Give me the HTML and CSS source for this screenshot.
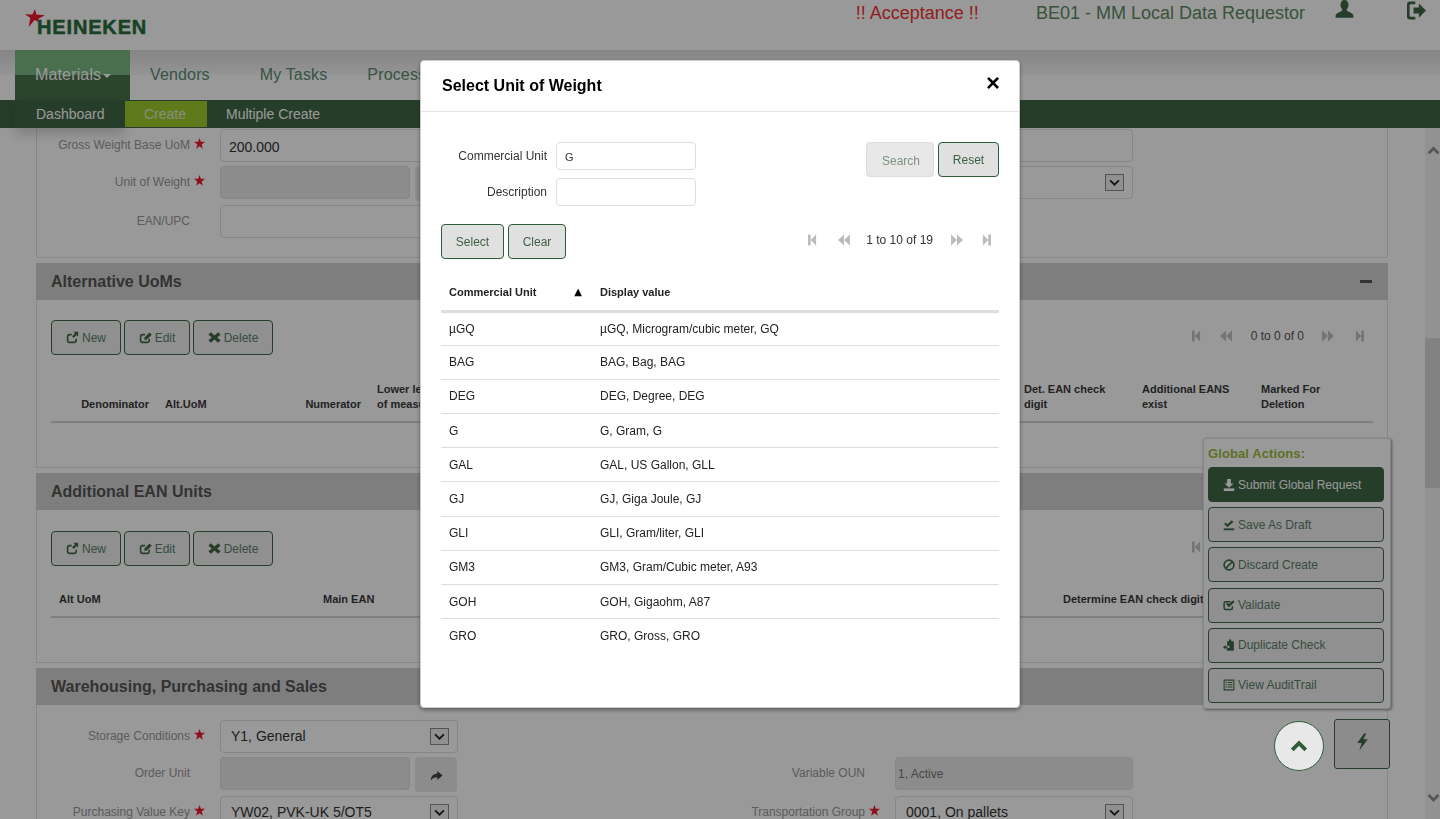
FILE: index.html
```html
<!DOCTYPE html>
<html lang="en">
<head>
    <meta charset="UTF-8">
    <meta name="viewport" content="width=device-width, initial-scale=1.0">
    <title>Select Unit of Weight</title>
    <link rel="stylesheet" href="styles.css">
</head>
<body>
    <svg class="sprite" xmlns="http://www.w3.org/2000/svg">
        <symbol id="i-user" viewBox="0 0 16 16"><path d="M8 0c2.2 0 3.4 1.8 3.4 4 0 1.6-.7 3.2-1.6 4 .1.8.5 1.2 1.4 1.6 1.6.7 3.8 1.4 4.3 3.4v2H.5v-2c.5-2 2.7-2.7 4.3-3.4.9-.4 1.3-.8 1.4-1.6-.9-.8-1.6-2.4-1.6-4C4.6 1.8 5.8 0 8 0z"/></symbol>
        <symbol id="i-logout" viewBox="0 0 16 16"><path d="M0 3a2.500 2.500 0 0 1 2.500-2.500H7v2.200H3a.8.8 0 0 0-.8.8v9a.8.8 0 0 0 .8.8h4v2.200H2.500A2.500 2.500 0 0 1 0 13z"/><path d="M5.500 5.500H10V2l6 6-6 6v-3.500H5.500z"/></symbol>
        <symbol id="i-new" viewBox="0 0 16 16"><path d="M12.500 9.500V12a2 2 0 0 1-2 2H4a2 2 0 0 1-2-2V6.500a2 2 0 0 1 2-2h3" fill="none" stroke="currentColor" stroke-width="2"/><path d="M9 1h6v6l-2-2-3.500 3.500-2-2L11 3z"/></symbol>
        <symbol id="i-edit" viewBox="0 0 16 16"><path d="M12.500 9.500V12a2 2 0 0 1-2 2H4a2 2 0 0 1-2-2V6.500a2 2 0 0 1 2-2h3.500" fill="none" stroke="currentColor" stroke-width="2"/><path d="M6.500 11l.5-3.200L13 1.800l2.700 2.700-6 6z"/></symbol>
        <symbol id="i-remove" viewBox="0 0 16 16"><path d="M3.500 1.500L8 5.500l4.500-4 3 3-4.200 3.500 4.200 3.500-3 3L8 10.500l-4.500 4-3-3L4.700 8 .5 4.500z"/></symbol>
        <symbol id="i-download" viewBox="0 0 16 16"><path d="M5.500 0h5v6H14l-6 5.500L2 6h3.500z"/><path d="M1 12.500h14V16H1z"/></symbol>
        <symbol id="i-saved" viewBox="0 0 16 16"><path d="M1 12.500h14V15H1z"/><path d="M1.500 6.500L3.500 4.500 6 7l5.500-5.500 2.500 2L6 11z"/></symbol>
        <symbol id="i-ban" viewBox="0 0 16 16"><circle cx="8" cy="8" r="6.500" fill="none" stroke="currentColor" stroke-width="2.200"/><path d="M3.500 12.500l9-9" stroke="currentColor" stroke-width="2.200"/></symbol>
        <symbol id="i-check" viewBox="0 0 16 16"><path d="M12.500 9.500V12a2 2 0 0 1-2 2H3.500a2 2 0 0 1-2-2V5.500a2 2 0 0 1 2-2H10" fill="none" stroke="currentColor" stroke-width="2"/><path d="M4 6.500l2-2 2 2 5.500-5 2 2L8 11z"/></symbol>
        <symbol id="i-duplicate" viewBox="0 0 16 16"><path d="M6 3h2V.8h3V3h3.500v12.500H5V12h3.500V9H5.500V3z"/><path d="M0 11l3.500-3v2H6v2H3.500v2z"/></symbol>
        <symbol id="i-list" viewBox="0 0 16 16"><path d="M1.500 1.500h13v13h-13z" fill="none" stroke="currentColor" stroke-width="1.400"/><path d="M3.500 4h2v1.400h-2zM6.500 4h6v1.400h-6zM3.500 7h2v1.400h-2zM6.500 7h6v1.400h-6zM3.500 10h2v1.400h-2zM6.500 10h6v1.400h-6z"/></symbol>
        <symbol id="i-flash" viewBox="0 0 16 16"><path d="M9.500 0L3 9h4.200L5 16l8-10.500H8.800L11.500 0z"/></symbol>
        <symbol id="i-up" viewBox="0 0 16 16"><path d="M2 11.500L8 5.500l6 6" fill="none" stroke="currentColor" stroke-width="3.400"/></symbol>
        <symbol id="i-down" viewBox="0 0 16 16"><path d="M2 5L8 11l6-6" fill="none" stroke="currentColor" stroke-width="3.400"/></symbol>
        <symbol id="i-chev" viewBox="0 0 19 17"><path d="M4.500 6l5 5 5-5" fill="none" stroke="currentColor" stroke-width="2"/></symbol>
        <symbol id="i-share" viewBox="0 0 16 16"><path d="M9 2.500l6.500 5.500L9 13.500V10c-3.500 0-6 1-8 4 0-5 3-8 8-8.500z"/></symbol>
        <symbol id="i-first" viewBox="0 0 10 12"><path d="M0 0h3v12H0zM3 6l6-6v12z"/></symbol>
        <symbol id="i-prev" viewBox="0 0 12 12"><path d="M0 6l6-5.500v11zM6 6l6-5.500v11z"/></symbol>
        <symbol id="i-next" viewBox="0 0 12 12"><path d="M12 6L6 .5v11zM6 6L0 .5v11z"/></symbol>
        <symbol id="i-last" viewBox="0 0 10 12"><path d="M10 0H7v12h3zM7 6L1 0v12z"/></symbol>
        <symbol id="i-star" viewBox="0 0 12 12"><path d="M6 0l1.500 4.200H12L8.400 7l1.300 4.600L6 8.900l-3.700 2.700L3.600 7 0 4.200h4.500z"/></symbol>
    </svg>

    <header class="topbar">
        <div class="logo">
            <svg class="logo-star" viewBox="0 0 20 18"><path d="M10 0l1.400 5.400L20 6.300l-6.600 3.500.6 3.500-4.400-2.200L3.700 18l1.500-9.200L0 5.200l7.400.2z"/></svg>
            <span class="logo-text">HEINEKEN</span>
        </div>
        <span class="env-name">!! Acceptance !!</span>
        <span class="user-role">BE01 - MM Local Data Requestor</span>
        <svg class="top-icon user-icon"><use href="#i-user"/></svg>
        <svg class="top-icon logout-icon"><use href="#i-logout"/></svg>
    </header>

    <nav class="mainnav">
        <a class="mainnav-item active">Materials<span class="caret"></span></a>
        <a class="mainnav-item">Vendors<span class="caret"></span></a>
        <a class="mainnav-item">My Tasks</a>
        <a class="mainnav-item">Process</a>
    </nav>
    <nav class="subnav">
        <a class="subnav-item first">Dashboard</a>
        <a class="subnav-item active">Create</a>
        <a class="subnav-item last">Multiple Create</a>
    </nav>

    <main class="page">
        <div class="content">
            <section class="panel panel-cut">
                <div class="field-row">
                    <div class="field">
                        <label class="field-label">Gross Weight Base UoM<span class="req"><svg><use href="#i-star"/></svg></span></label>
                        <input class="input" type="text" value="200.000">
                    </div>
                    <div class="field">
                        <label class="field-label"></label>
                        <input class="input" type="text">
                    </div>
                </div>
                <div class="field-row wide">
                    <div class="field">
                        <label class="field-label">Unit of Weight<span class="req"><svg><use href="#i-star"/></svg></span></label>
                        <input class="input input-short" type="text" readonly>
                        <button class="go-btn"><svg><use href="#i-share"/></svg></button>
                    </div>
                    <div class="field">
                        <label class="field-label"></label>
                        <div class="select"><span></span><span class="select-btn"><svg><use href="#i-chev"/></svg></span></div>
                    </div>
                </div>
                <div class="field-row">
                    <div class="field">
                        <label class="field-label">EAN/UPC<span class="req"></span></label>
                        <input class="input" type="text">
                    </div>
                </div>
            </section>

            <section class="panel">
                <div class="panel-head">
                    <h3>Alternative UoMs</h3>
                    <span class="collapse-bar"></span>
                </div>
                <div class="panel-body">
                    <div class="toolbar">
                        <div class="btn-group">
                            <button class="btn btn-new"><svg><use href="#i-new"/></svg>New</button>
                            <button class="btn btn-edit"><svg><use href="#i-edit"/></svg>Edit</button>
                            <button class="btn btn-delete"><svg><use href="#i-remove"/></svg>Delete</button>
                        </div>
                        <div class="pager">
                            <svg class="pg-first"><use href="#i-first"/></svg>
                            <svg class="pg-prev"><use href="#i-prev"/></svg>
                            <span class="pg-text">0 to 0 of 0</span>
                            <svg class="pg-next"><use href="#i-next"/></svg>
                            <svg class="pg-last"><use href="#i-last"/></svg>
                        </div>
                    </div>
                    <table class="grid grid-alt">
                        <colgroup><col class="c1"><col class="c2"><col class="c3"><col class="c4"><col class="c5"><col class="c6"><col class="c7"></colgroup>
                        <thead>
                            <tr>
                                <th class="right">Denominator</th>
                                <th>Alt.UoM</th>
                                <th class="right">Numerator</th>
                                <th>Lower level of<br>of measure</th>
                                <th>Det. EAN check<br>digit</th>
                                <th>Additional EANS<br>exist</th>
                                <th>Marked For<br>Deletion</th>
                            </tr>
                        </thead>
                    </table>
                </div>
            </section>

            <section class="panel">
                <div class="panel-head">
                    <h3>Additional EAN Units</h3>
                </div>
                <div class="panel-body ean-body">
                    <div class="toolbar">
                        <div class="btn-group">
                            <button class="btn btn-new"><svg><use href="#i-new"/></svg>New</button>
                            <button class="btn btn-edit"><svg><use href="#i-edit"/></svg>Edit</button>
                            <button class="btn btn-delete"><svg><use href="#i-remove"/></svg>Delete</button>
                        </div>
                        <div class="pager">
                            <svg class="pg-first"><use href="#i-first"/></svg>
                            <svg class="pg-prev"><use href="#i-prev"/></svg>
                            <span class="pg-text">0 to 0 of 0</span>
                            <svg class="pg-next"><use href="#i-next"/></svg>
                            <svg class="pg-last"><use href="#i-last"/></svg>
                        </div>
                    </div>
                    <table class="grid grid-ean">
                        <colgroup><col class="e1"><col class="e2"><col class="e3"></colgroup>
                        <thead>
                            <tr>
                                <th>Alt UoM</th>
                                <th>Main EAN</th>
                                <th>Determine EAN check digit</th>
                            </tr>
                        </thead>
                    </table>
                </div>
            </section>

            <section class="panel">
                <div class="panel-head">
                    <h3>Warehousing, Purchasing and Sales</h3>
                </div>
                <div class="panel-body fields">
                    <div class="field-row">
                        <div class="field">
                            <label class="field-label">Storage Conditions<span class="req"><svg><use href="#i-star"/></svg></span></label>
                            <div class="select"><span>Y1, General</span><span class="select-btn"><svg><use href="#i-chev"/></svg></span></div>
                        </div>
                    </div>
                    <div class="field-row wide">
                        <div class="field">
                            <label class="field-label">Order Unit<span class="req"></span></label>
                            <input class="input input-short" type="text" readonly>
                            <button class="go-btn"><svg><use href="#i-share"/></svg></button>
                        </div>
                        <div class="field">
                            <label class="field-label">Variable OUN<span class="req"></span></label>
                            <input class="input input-small" type="text" value="1, Active" readonly>
                        </div>
                    </div>
                    <div class="field-row">
                        <div class="field">
                            <label class="field-label">Purchasing Value Key<span class="req"><svg><use href="#i-star"/></svg></span></label>
                            <div class="select"><span>YW02, PVK-UK 5/OT5</span><span class="select-btn"><svg><use href="#i-chev"/></svg></span></div>
                        </div>
                        <div class="field">
                            <label class="field-label">Transportation Group<span class="req"><svg><use href="#i-star"/></svg></span></label>
                            <div class="select"><span>0001, On pallets</span><span class="select-btn"><svg><use href="#i-chev"/></svg></span></div>
                        </div>
                    </div>
                </div>
            </section>
        </div>
        <div class="scrollbar">
            <svg class="scroll-arrow"><use href="#i-up"/></svg>
            <div class="scroll-thumb"></div>
            <svg class="scroll-arrow"><use href="#i-down"/></svg>
        </div>
    </main>

    <aside class="global-actions">
        <h4>Global Actions:</h4>
        <button class="action primary"><svg><use href="#i-download"/></svg>Submit Global Request</button>
        <button class="action"><svg><use href="#i-saved"/></svg>Save As Draft</button>
        <button class="action"><svg><use href="#i-ban"/></svg>Discard Create</button>
        <button class="action"><svg><use href="#i-check"/></svg>Validate</button>
        <button class="action"><svg><use href="#i-duplicate"/></svg>Duplicate Check</button>
        <button class="action"><svg><use href="#i-list"/></svg>View AuditTrail</button>
    </aside>
    <button class="flash-btn"><svg><use href="#i-flash"/></svg></button>

    <div class="backdrop"></div>
    <button class="top-btn"><svg><use href="#i-up"/></svg></button>

    <div class="modal">
        <div class="modal-head">
            <h2>Select Unit of Weight</h2>
            <span class="modal-close">&times;</span>
        </div>
        <div class="modal-body">
            <form class="search-form">
                <div class="search-fields">
                    <div class="search-row">
                        <label>Commercial Unit</label>
                        <input type="text" value="G">
                    </div>
                    <div class="search-row">
                        <label>Description</label>
                        <input type="text">
                    </div>
                </div>
                <div class="btn-group">
                    <button type="button" class="mbtn disabled btn-search">Search</button>
                    <button type="button" class="mbtn btn-reset">Reset</button>
                </div>
            </form>
            <div class="select-bar">
                <div class="btn-group">
                    <button class="mbtn btn-select">Select</button>
                    <button class="mbtn btn-clear">Clear</button>
                </div>
                <div class="pager modal-pager">
                    <svg class="pg-first"><use href="#i-first"/></svg>
                    <svg class="pg-prev"><use href="#i-prev"/></svg>
                    <span class="pg-text">1 to 10 of 19</span>
                    <svg class="pg-next"><use href="#i-next"/></svg>
                    <svg class="pg-last"><use href="#i-last"/></svg>
                </div>
            </div>
            <table class="unit-table">
                <thead>
                    <tr>
                        <th class="unit-col">Commercial Unit<span class="sort">&#9650;</span></th>
                        <th>Display value</th>
                    </tr>
                </thead>
                <tbody>
                    <tr><td>&micro;GQ</td><td>&micro;GQ, Microgram/cubic meter, GQ</td></tr>
                    <tr><td>BAG</td><td>BAG, Bag, BAG</td></tr>
                    <tr><td>DEG</td><td>DEG, Degree, DEG</td></tr>
                    <tr><td>G</td><td>G, Gram, G</td></tr>
                    <tr><td>GAL</td><td>GAL, US Gallon, GLL</td></tr>
                    <tr><td>GJ</td><td>GJ, Giga Joule, GJ</td></tr>
                    <tr><td>GLI</td><td>GLI, Gram/liter, GLI</td></tr>
                    <tr><td>GM3</td><td>GM3, Gram/Cubic meter, A93</td></tr>
                    <tr><td>GOH</td><td>GOH, Gigaohm, A87</td></tr>
                    <tr><td>GRO</td><td>GRO, Gross, GRO</td></tr>
                </tbody>
            </table>
        </div>
    </div>
</body>
</html>
```

FILE: styles.css
```css
* {
    box-sizing: border-box;
}

body {
    font-family: "Liberation Sans", Arial, sans-serif;
    font-size: 12px;
    background-color: #fff;
    margin: 0;
    height: 819px;
    overflow: hidden;
}

.sprite {
    display: none;
}

button {
    font-family: inherit;
}

svg {
    fill: currentColor;
}

/* top bar */
.topbar {
    height: 50px;
    display: flex;
    align-items: flex-start;
    padding-left: 25px;
    background-color: #fff;
}

.logo {
    display: flex;
    align-items: flex-start;
    margin-right: auto;
    padding-top: 9px;
}

.logo-star {
    width: 20px;
    height: 18px;
    color: #ee1c30;
    fill: currentColor;
}

.logo-text {
    margin: 8px 0 0 -8px;
    font-size: 20px;
    line-height: 20px;
    font-weight: bold;
    letter-spacing: 0.85px;
    color: #2a6e3c;
    -webkit-text-stroke: 0.5px #2a6e3c;
}

.env-name {
    margin-top: 2px;
    font-size: 18px;
    line-height: 22px;
    color: #f53232;
}

.user-role {
    margin: 2px 0 0 57px;
    font-size: 18px;
    line-height: 22px;
    color: #5c8a64;
}

.top-icon {
    width: 19px;
    height: 19px;
    color: #406845;
}

.user-icon {
    margin-left: 30px;
}

.logout-icon {
    margin: 1px 14px 0 53px;
}

/* navigation */
.mainnav {
    height: 50px;
    display: flex;
    padding-left: 15px;
    background: linear-gradient(#dedede, #f7f7f7) 0 0 / 100% 25px repeat-x;
}

.mainnav-item {
    padding: 0 20px;
    font-size: 16px;
    line-height: 50px;
    letter-spacing: 0.15px;
    color: #5c8a72;
    white-space: nowrap;
}

.mainnav-item.active {
    width: 115px;
    color: #fff;
    background: linear-gradient(#7bb982 25px, #49734c 25px);
}

.caret {
    display: inline-block;
    margin-left: 2px;
    vertical-align: middle;
    border-top: 4px solid #fff;
    border-left: 4px solid transparent;
    border-right: 4px solid transparent;
}

.subnav {
    position: relative;
    height: 28px;
    display: flex;
    padding-left: 15px;
    background-color: #406845;
}

.subnav-item {
    padding: 0 20px 0 21px;
    font-size: 14px;
    line-height: 28px;
    color: #fff;
}

.subnav-item.first {
    width: 110px;
    box-shadow: 0 6px 12px rgba(0, 0, 0, 0.18);
}

.subnav-item.active {
    width: 82px;
    height: 26px;
    margin: 1px 0;
    padding: 0 19px;
    line-height: 26px;
    color: #e4eed0;
    background-color: #9dcc2e;
}

.subnav-item.last {
    padding-left: 19px;
}

/* page content */
.page {
    height: 691px;
    display: flex;
    overflow: hidden;
}

.content {
    flex: 1;
    padding: 0 37px 0 36px;
}

.panel {
    margin-bottom: 5px;
    border: 1px solid #e3e3e3;
}

.panel-cut {
    height: 130px;
    padding-top: 1px;
    border-top: 0;
}

.panel-head {
    height: 37px;
    display: flex;
    align-items: center;
    justify-content: space-between;
    padding: 0 16px 0 15px;
    background-color: #d3d3d3;
    margin: -1px -1px 0;
}

.panel-head h3 {
    margin: 0;
    font-size: 16px;
    color: #555;
}

.collapse-bar {
    width: 12px;
    height: 3px;
    background-color: #555;
}

.panel-body {
    padding: 20px 14px 44px;
}

.panel-body.ean-body {
    padding-top: 21px;
}

.panel-body.fields {
    padding: 15px 0 0;
}

.toolbar {
    display: flex;
    justify-content: space-between;
}

.btn-group {
    display: flex;
    gap: 3px;
}

.btn {
    height: 35px;
    padding: 0;
    display: flex;
    align-items: center;
    justify-content: center;
    gap: 3px;
    font-size: 12px;
    color: #5a7f6a;
    background-color: #f0f0f0;
    border: 1px solid #406845;
    border-radius: 4px;
}

.btn svg {
    width: 13px;
    height: 13px;
    color: #406845;
}

.btn-new {
    width: 70px;
}

.btn-edit {
    width: 66px;
}

.btn-delete {
    width: 80px;
}

.pager {
    display: flex;
    align-items: center;
    height: 32px;
    margin-right: 9px;
    color: #c4c4c4;
}

.pager svg {
    height: 12px;
}

.pg-first,
.pg-last {
    width: 9px;
}

.pg-prev,
.pg-next {
    width: 12px;
}

.pg-prev {
    margin: 0 19px;
}

.pg-next {
    margin: 0 21px 0 18px;
}

.pg-text {
    font-size: 12px;
    color: #555;
}

.grid {
    width: 100%;
    table-layout: fixed;
    border-collapse: collapse;
}

.grid th {
    padding: 0 8px 9px;
    font-size: 11px;
    line-height: 15px;
    font-weight: bold;
    color: #3a3a3a;
    text-align: left;
    vertical-align: bottom;
    white-space: nowrap;
    overflow: hidden;
    border-bottom: 2px solid #d4d4d4;
}

.grid th.right {
    text-align: right;
}

.grid-alt {
    margin-top: 27px;
}

.grid-ean {
    margin-top: 26px;
}

.c1 { width: 106px; }
.c2 { width: 140px; }
.c3 { width: 72px; }
.c5 { width: 118px; }
.c6 { width: 119px; }
.c7 { width: 120px; }

.e1 { width: 264px; }
.e3 { width: 318px; }

/* form fields */
.field-row {
    display: flex;
    margin-bottom: 4px;
}

.field-row.wide {
    margin-bottom: 6px;
}

.field {
    flex: 0 0 675px;
    display: flex;
    align-items: flex-start;
    height: 33px;
}

.field-label {
    width: 183px;
    height: 33px;
    flex: none;
    display: flex;
    justify-content: flex-end;
    align-items: center;
    padding-bottom: 2px;
    color: #999;
    white-space: nowrap;
}

.req {
    width: 30px;
    flex: none;
    padding: 0 0 3px 4px;
    color: #ee1c30;
    display: flex;
}

.req svg {
    width: 11px;
    height: 11px;
}

.input,
.select {
    width: 238px;
    height: 33px;
    font-family: inherit;
    font-size: 14px;
    color: #333;
    background-color: #fff;
    border: 1px solid #e0e0e0;
    border-radius: 4px;
}

.input {
    padding: 2px 8px 0;
}

.input[readonly] {
    background-color: #e9e9e9;
}

.input-short {
    width: 190px;
}

.input.input-small {
    padding: 0 2px;
    font-size: 12px;
    color: #777;
}

.select {
    display: flex;
    align-items: center;
    justify-content: space-between;
    padding: 0 8px 1px 10px;
}

.select-btn {
    width: 19px;
    height: 17px;
    display: flex;
    color: #222;
    background-color: #f0f0f0;
    border: 1px solid #8a8a8a;
}

.select-btn svg {
    width: 17px;
    height: 15px;
}

.go-btn {
    width: 42px;
    height: 35px;
    margin-left: 5px;
    padding: 0;
    color: #444;
    background-color: #e9e9e9;
    border: 0;
    border-radius: 4px;
}

.go-btn svg {
    width: 13px;
    height: 13px;
    vertical-align: middle;
}

/* scrollbar */
.scrollbar {
    width: 16px;
    display: flex;
    flex-direction: column;
    align-items: center;
    background-color: #f3f3f3;
}

.scroll-arrow {
    width: 13px;
    height: 13px;
    margin-top: 16px;
    color: #8f8f8f;
}

.scroll-thumb {
    width: 16px;
    height: 150px;
    margin: 181px 0 287px;
    background-color: #d9d9d9;
}

/* floating actions */
.global-actions {
    position: absolute;
    left: 1203px;
    top: 438px;
    width: 188px;
    height: 271px;
    padding: 0 4px;
    background-color: #fff;
    border: 1px solid #e0e0e0;
    border-radius: 3px;
    box-shadow: 1px 1px 3px rgba(0, 0, 0, 0.45);
}

.global-actions h4 {
    margin: 7px 0 6px;
    font-size: 13px;
    line-height: 15px;
    letter-spacing: 0.1px;
    color: #9dbb3a;
}

.action {
    width: 176px;
    height: 35px;
    display: flex;
    align-items: center;
    gap: 3px;
    margin-bottom: 5.2px;
    padding: 0 0 0 14px;
    font-size: 12px;
    color: #5a7f6a;
    background-color: #f0f0f0;
    border: 1px solid #406845;
    border-radius: 4px;
}

.action svg {
    width: 12px;
    height: 12px;
    color: #406845;
}

.action.primary {
    color: #fff;
    background-color: #406845;
}

.action.primary svg {
    color: #fff;
}

.flash-btn {
    position: absolute;
    left: 1334px;
    top: 719px;
    width: 56px;
    height: 50px;
    padding: 0;
    color: #406845;
    background-color: #e9e9e9;
    border: 1px solid #406845;
    border-radius: 3px;
}

.flash-btn svg {
    width: 17px;
    height: 18px;
    margin-bottom: 1px;
}

.top-btn {
    position: fixed;
    z-index: 30;
    left: 1274px;
    top: 721px;
    width: 50px;
    height: 50px;
    padding: 0;
    color: #2f5d38;
    background-color: #e8e8e8;
    border: 1px solid #2f5d38;
    border-radius: 50%;
}

.top-btn svg {
    width: 18px;
    height: 18px;
    vertical-align: middle;
}

.backdrop {
    position: fixed;
    z-index: 20;
    left: 0;
    top: 0;
    width: 100%;
    height: 100%;
    background-color: rgba(0, 0, 0, 0.4);
}

/* modal */
.modal {
    position: fixed;
    z-index: 40;
    left: 420px;
    top: 60px;
    width: 600px;
    height: 648px;
    background-color: #fff;
    border: 1px solid #ccc;
    border-radius: 4px;
    box-shadow: 0 2px 4px rgba(0, 0, 0, 0.4);
}

.modal-head {
    height: 51px;
    display: flex;
    align-items: center;
    justify-content: space-between;
    padding: 0 21px;
    border-bottom: 1px solid #e5e5e5;
}

.modal-head h2 {
    margin: 0;
    font-size: 16px;
    color: #000;
}

.modal-close {
    margin: -6px -2px 0 0;
    font-size: 24px;
    line-height: 24px;
    font-weight: bold;
    color: #000;
}

.modal-body {
    padding: 30px 20px 0;
}

.search-form,
.select-bar {
    display: flex;
    justify-content: space-between;
}

.search-fields {
    display: flex;
    flex-direction: column;
    gap: 8px;
}

.search-row {
    display: flex;
    align-items: center;
    gap: 9px;
}

.search-row label {
    width: 106px;
    text-align: right;
    color: #333;
}

.search-row input {
    width: 140px;
    height: 28px;
    padding: 2px 8px 0;
    font-family: inherit;
    font-size: 11px;
    color: #333;
    border: 1px solid #ddd;
    border-radius: 4px;
}

.mbtn {
    height: 35px;
    padding: 0;
    font-size: 12px;
    color: #3d6044;
    background-color: #e0e0e0;
    border: 1px solid #2f5d38;
    border-radius: 4px;
}

.mbtn.disabled {
    padding: 2px 0 0 2px;
    color: #7d9182;
    background-color: #e8e8e8;
    border-color: #ddd;
}

.btn-search {
    width: 68px;
    margin-right: 1px;
}

.btn-reset {
    width: 61px;
}

.btn-select {
    width: 63px;
    margin-right: 1px;
}

.btn-clear {
    width: 58px;
}

.select-bar {
    margin-top: 18px;
}

.modal-pager {
    margin-right: 8px;
    height: 32px;
    color: #bbb;
}

.modal-pager .pg-prev {
    margin: 0 16px 0 21px;
}

.modal-pager .pg-next {
    margin: 0 19px 0 18px;
}

.modal-pager .pg-text {
    color: #333;
}

.unit-table {
    width: 100%;
    margin-top: 17px;
    border-collapse: collapse;
}

.unit-table th {
    height: 35px;
    padding: 0 8px 1px;
    font-size: 11px;
    font-weight: bold;
    text-align: left;
    color: #222;
    border-bottom: 3px solid #ddd;
}

.unit-col {
    width: 151px;
}

.sort {
    float: right;
    margin-right: 2px;
    font-family: "DejaVu Sans", sans-serif;
    font-size: 10px;
    color: #000;
}

.unit-table td {
    height: 34.2px;
    padding: 0 8px;
    font-size: 12px;
    color: #222;
    border-bottom: 1px solid #ddd;
}

.unit-table tr:last-child td {
    border-bottom: 0;
}
```
